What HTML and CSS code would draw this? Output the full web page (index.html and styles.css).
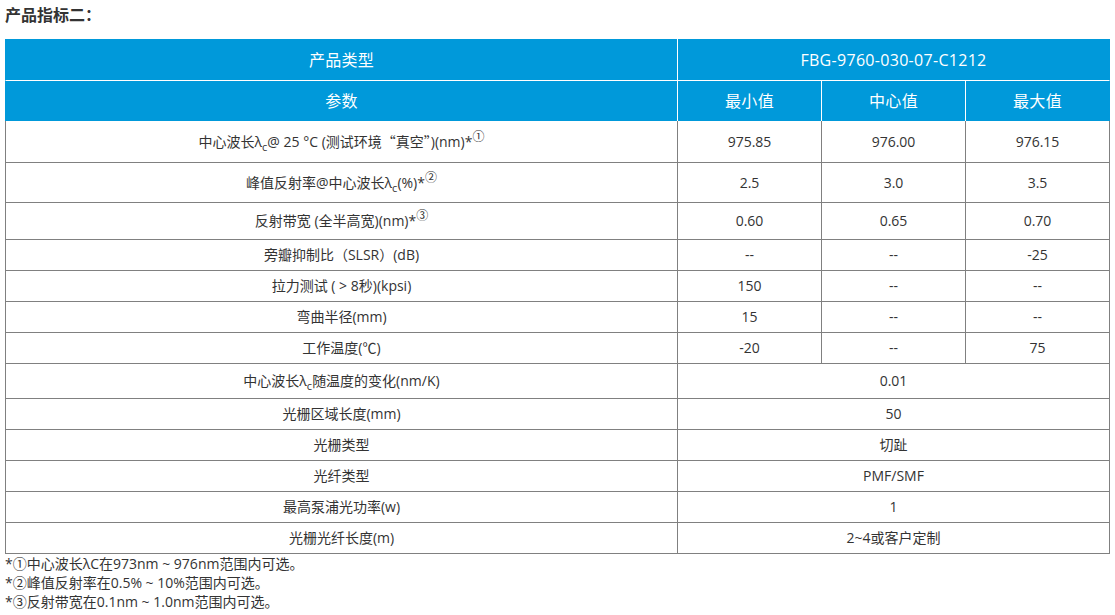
FILE: index.html
```html
<!DOCTYPE html>
<html lang="zh-CN">
<head>
<meta charset="utf-8">
<title>产品指标二</title>
<link rel="stylesheet" href="styles.css">
</head>
<body>
<div class="page">
  <h3 class="title">产品指标二：</h3>
  <table class="spec">
    <colgroup>
      <col class="c-name">
      <col class="c-val">
      <col class="c-val">
      <col class="c-val">
    </colgroup>
    <thead>
      <tr class="h42">
        <th class="first">产品类型</th>
        <th class="last" colspan="3">FBG-9760-030-07-C1212</th>
      </tr>
      <tr class="h40 hrow2">
        <th class="first">参数</th>
        <th>最小值</th>
        <th>中心值</th>
        <th class="last">最大值</th>
      </tr>
    </thead>
    <tbody>
      <tr class="h42">
        <td>中心波长λ<sub>c</sub>@ 25 °C (测试环境<span class="cjk">“</span>真空<span class="cjk">”</span>)(nm)*<sup>①</sup></td>
        <td>975.85</td><td>976.00</td><td>976.15</td>
      </tr>
      <tr class="h40">
        <td>峰值反射率@中心波长λ<sub>c</sub>(%)*<sup>②</sup></td>
        <td>2.5</td><td>3.0</td><td>3.5</td>
      </tr>
      <tr class="h37">
        <td>反射带宽 (全半高宽)(nm)*<sup>③</sup></td>
        <td>0.60</td><td>0.65</td><td>0.70</td>
      </tr>
      <tr class="h31">
        <td>旁瓣抑制比（SLSR）(dB)</td>
        <td>--</td><td>--</td><td>-25</td>
      </tr>
      <tr class="h31">
        <td>拉力测试 ( &gt; 8秒)(kpsi)</td>
        <td>150</td><td>--</td><td>--</td>
      </tr>
      <tr class="h31">
        <td>弯曲半径(mm)</td>
        <td>15</td><td>--</td><td>--</td>
      </tr>
      <tr class="h31">
        <td>工作温度(℃)</td>
        <td>-20</td><td>--</td><td>75</td>
      </tr>
      <tr class="h35">
        <td>中心波长λ<sub>c</sub>随温度的变化(nm/K)</td>
        <td colspan="3">0.01</td>
      </tr>
      <tr class="h31">
        <td>光栅区域长度(mm)</td>
        <td colspan="3">50</td>
      </tr>
      <tr class="h31">
        <td>光栅类型</td>
        <td colspan="3">切趾</td>
      </tr>
      <tr class="h31">
        <td>光纤类型</td>
        <td colspan="3">PMF/SMF</td>
      </tr>
      <tr class="h31">
        <td>最高泵浦光功率(w)</td>
        <td colspan="3">1</td>
      </tr>
      <tr class="h31">
        <td>光栅光纤长度(m)</td>
        <td colspan="3">2~4或客户定制</td>
      </tr>
    </tbody>
  </table>
  <div class="notes">
    <p>*①中心波长λC在973nm ~ 976nm范围内可选。</p>
    <p>*②峰值反射率在0.5% ~ 10%范围内可选。</p>
    <p>*③反射带宽在0.1nm ~ 1.0nm范围内可选。</p>
  </div>
</div>
</body>
</html>
```
FILE: styles.css
```css
html, body {
  margin: 0;
  padding: 0;
  background: #fff;
}
body {
  font-family: "Open Sans", "Noto Sans CJK SC", sans-serif;
  font-size: 14px;
  color: #333;
}
.page {
  padding: 4px 5px 0 5px;
}
.title {
  margin: 0;
  font-size: 16px;
  font-weight: bold;
  line-height: 22px;
  color: #333;
  height: 35px;
}
.spec {
  width: 1105px;
  table-layout: fixed;
  border-collapse: separate;
  border-spacing: 0;
}
.c-name { width: 673px; }
.c-val { width: 144px; }
.spec th, .spec td {
  text-align: center;
  vertical-align: middle;
  padding: 0 4px;
  line-height: 20px;
  box-sizing: border-box;
}
.spec th {
  background: #0099da;
  color: #fff;
  font-weight: normal;
  font-size: 16px;
  letter-spacing: 0.3px;
  border-right: 1px solid #fff;
  border-bottom: 1px solid #fff;
}
.spec th.first { border-left: 1px solid #0099da; }
.spec th.last { border-right: 1px solid #0099da; }
.spec .hrow2 th { border-bottom: 0; }
.spec td {
  border-right: 1px solid #808080;
  border-bottom: 1px solid #808080;
}
.spec td:first-child { border-left: 1px solid #808080; }
.h42 { height: 42px; }
.h40 { height: 40px; }
.h37 { height: 37px; }
.h35 { height: 35px; }
.h31 { height: 31px; }
.cjk {
  font-family: "Noto Sans CJK SC", sans-serif;
}
.spec sub {
  font-size: 11px;
  vertical-align: -4px;
  line-height: 0;
}
.spec sup {
  font-family: "Noto Sans CJK SC", sans-serif;
  font-size: 12px;
  vertical-align: 6px;
  line-height: 0;
}
.notes p {
  margin: 0;
  line-height: 19px;
  font-size: 14px;
  color: #333;
}
```
